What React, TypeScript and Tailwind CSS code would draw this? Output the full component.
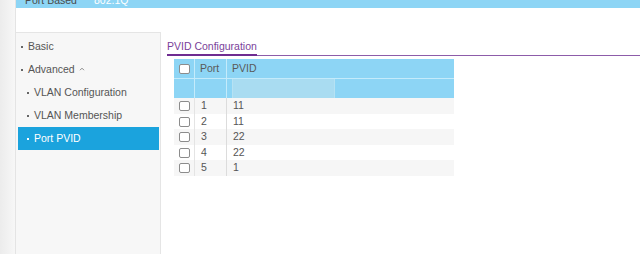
import React from 'react';

const menu = [
    { label: 'Basic', level: 0 },
    { label: 'Advanced', level: 0, caret: true },
    { label: 'VLAN Configuration', level: 1 },
    { label: 'VLAN Membership', level: 1 },
    { label: 'Port PVID', level: 1, active: true },
];

const rows = [
    { port: 1, pvid: 11 },
    { port: 2, pvid: 11 },
    { port: 3, pvid: 22 },
    { port: 4, pvid: 22 },
    { port: 5, pvid: 1 },
];

const Checkbox = () => (
    <span className="block w-[11px] h-[10px] rounded-[2px] border border-[#8c8c8c] bg-white" />
);

export default function App() {
    return (
        <div className="flex w-[640px] h-[254px] overflow-hidden bg-white font-['Liberation_Sans',Arial,sans-serif] text-[10.5px] text-[#555]">
            <div className="w-[16px] shrink-0 bg-gradient-to-r from-[#ececec] to-[#f7f7f7] border-r border-[#e4e4e4]" />
            <div className="flex-1 flex flex-col">
                <div className="h-[8px] bg-[#8dd5f5] overflow-hidden flex gap-[17px] pl-[9px] text-[10.5px] leading-[14px]">
                    <span className="-mt-[7px] text-[#4a4a4a]">Port Based</span>
                    <span className="-mt-[7px] text-white">802.1Q</span>
                </div>
                <div className="flex flex-1 pt-[24px]">
                    <div className="w-[145px] shrink-0 bg-[#f7f7f7] border-t border-r border-[#e5e5e5] pl-[2px] pr-[1px] pt-[2px]">
                        {menu.map(item => (
                            <div
                                key={item.label}
                                className={`h-[23px] flex items-center ${item.level ? 'pl-[9px]' : 'pl-[3px]'} ${item.active ? 'bg-[#1ba3dd] text-white' : 'text-[#555]'}`}
                            >
                                <span className={`w-[2px] h-[2px] mr-[5px] ${item.active ? 'bg-white' : 'bg-[#666]'}`} />
                                <span>{item.label}</span>
                                {item.caret && (
                                    <svg width="6" height="4" viewBox="0 0 6 4" className="ml-[4px] mb-[2px]">
                                        <path d="M1 3.2 L3 1.2 L5 3.2" fill="none" stroke="#888" strokeWidth="1" />
                                    </svg>
                                )}
                            </div>
                        ))}
                    </div>
                    <div className="flex-1 pl-[6px]">
                        <div className="border-b border-[#8d5ca9]">
                            <div className="inline-block -mb-px pt-[7px] pb-[1px] leading-[14px] border-b-2 border-[#6f2c91] text-[#7a3f9a]">
                                PVID Configuration
                            </div>
                        </div>
                        <div className="mt-[3px] ml-[7px] w-[280px]">
                            <div className="grid grid-cols-[21px_32px_1fr] h-[20px] bg-[#8dd5f5] border-b border-[#c4ebfb]">
                                <div className="flex items-center justify-center border-r border-[#c4ebfb]"><Checkbox /></div>
                                <div className="flex items-center pl-[5px] border-r border-[#c4ebfb] text-[#5a5a5a]">Port</div>
                                <div className="flex items-center pl-[5px] text-[#5a5a5a]">PVID</div>
                            </div>
                            <div className="grid grid-cols-[21px_32px_1fr] h-[19px] bg-[#8dd5f5]">
                                <div className="border-r border-[#c4ebfb]" />
                                <div className="border-r border-[#c4ebfb]" />
                                <div className="pl-[5px]">
                                    <div className="w-[103px] h-[19px] bg-[#a9dcf1] border-l border-r border-[#b6e2f3]" />
                                </div>
                            </div>
                            {rows.map((r, i) => (
                                <div
                                    key={r.port}
                                    className={`grid grid-cols-[21px_32px_1fr] ${i % 2 === 0 ? 'h-[16px] bg-[#f6f6f6]' : 'h-[15px] bg-white'}`}
                                >
                                    <div className="flex items-center justify-center border-r border-[#e4e4e4]"><Checkbox /></div>
                                    <div className="flex items-center pl-[6px] border-r border-[#dcdcdc]">{r.port}</div>
                                    <div className="flex items-center pl-[6px]">{r.pvid}</div>
                                </div>
                            ))}
                        </div>
                    </div>
                </div>
            </div>
        </div>
    );
}
